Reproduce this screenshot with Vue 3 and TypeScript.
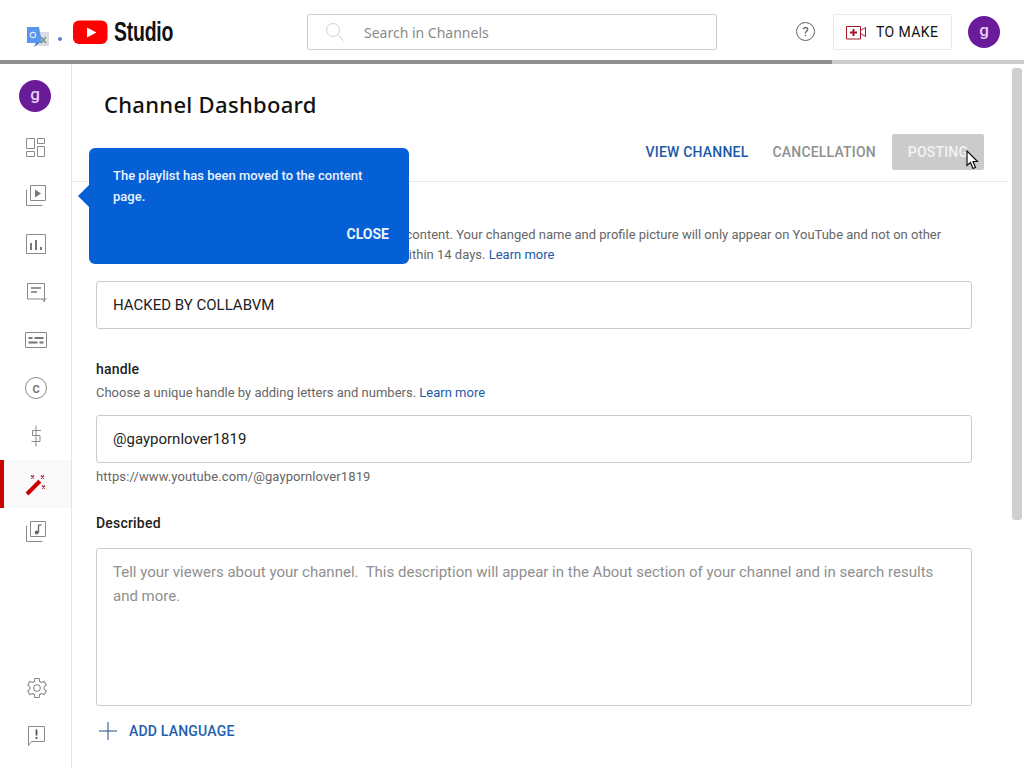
<script setup lang="ts">
const upper: { id: string; d: string; fill?: boolean }[] = [
  { id: 'dash', d: 'M3.5 3.5h8v10h-8zM14.5 3.5h7v5h-7zM3.5 16.500h8v5h-8zM14.5 11.500h7v10h-7z' },
  { id: 'content', d: 'M7.500 2.500h15v15h-15zM3.500 6.500v16h16' },
  { id: 'analytics', d: 'M3.500 3.500h19v19h-19z' },
  { id: 'comments', d: 'M4.500 4.500h17v15.500h2M4.500 4.500v15.500h17v3l-2.500-3' },
  { id: 'subs', d: 'M2.500 5.500h21v15h-21z' },
  { id: 'copyright', d: 'M13 2.500a10.500 10.500 0 1 0 0 21a10.500 10.500 0 0 0 0-21z' },
  { id: 'earn', d: 'M13 2.500v21M18 7.500h-8.500v5h7.500v6h-8.500' },
]
</script>

<template>
  <div class="app">
    <header class="top">
      <div class="brand">
        <svg class="translate" width="22" height="22" viewBox="0 0 22 22" aria-hidden="true">
          <rect x="10" y="5" width="12" height="14" fill="#dadce0" />
          <path d="M0 0h12l3 16H0z" fill="#5a95ee" />
          <path d="M9 16l-2 4 5-4z" fill="#3b5fb0" />
          <circle cx="6" cy="8" r="2.700" fill="none" stroke="#dbe8fb" stroke-width="1.200" />
          <path d="M14 10l5 6M19 10l-5 6" stroke="#6d8f80" stroke-width="1.200" />
        </svg>
        <span class="dot"></span>
        <svg class="yt" width="35" height="24" viewBox="0 0 35 24" aria-hidden="true">
          <rect x="0" y="0.500" width="34.500" height="23.500" rx="6" fill="#f00" />
          <path d="M14 7.500l9.500 5-9.500 5z" fill="#fff" />
        </svg>
        <span class="studio">Studio</span>
      </div>
      <div class="search">
        <svg width="20" height="20" viewBox="0 0 20 20" aria-hidden="true">
          <circle cx="8" cy="8" r="6.500" fill="none" stroke="#d0d0d0" stroke-width="1" />
          <path d="M12.700 12.700l6 6" stroke="#d0d0d0" stroke-width="1" />
        </svg>
        <span>Search in Channels</span>
      </div>
      <div class="actions">
        <span class="help">?</span>
        <button class="make">
          <svg width="22" height="16" viewBox="0 0 22 16" aria-hidden="true">
            <path d="M.500 2.500h14v12.500H.500zM14.500 6.500l5-3v9l-5-3" fill="none" stroke="#a3162c" stroke-width="1" />
            <path d="M7.500 5v7M4 8.500h7" stroke="#a3162c" stroke-width="2" />
          </svg>
          TO MAKE
        </button>
        <span class="avatar">g</span>
      </div>
    </header>
    <div class="progress"><div class="progress-fill"></div></div>

    <div class="body">
      <nav class="side">
        <div class="side-avatar"><span class="avatar">g</span></div>
        <div v-for="item in upper" :key="item.id" class="nav-row">
          <svg width="26" height="26" viewBox="0 0 26 26" aria-hidden="true">
            <path :d="item.d" fill="none" stroke="#8a8a8a" stroke-width="1" />
            <path v-if="item.id === 'content'" d="M12 6.500l6 4-6 4z" fill="#777" />
            <path v-if="item.id === 'analytics'" d="M8 12v7M13 9v10M18 16v3" stroke="#777" stroke-width="2" />
            <path v-if="item.id === 'comments'" d="M8 9h10M8 13h6" stroke="#777" stroke-width="1.500" />
            <path v-if="item.id === 'subs'" d="M5.500 11h4M11.500 11h9M5.500 15.500h9M16.500 15.500h4" stroke="#777" stroke-width="2" />
            <text v-if="item.id === 'copyright'" x="13" y="17.500" class="c-glyph">C</text>
          </svg>
        </div>
        <div class="nav-row active">
          <svg width="26" height="26" viewBox="0 0 26 26" aria-hidden="true">
            <path d="M4 23L17 10" stroke="#cc0000" stroke-width="4" />
            <path d="M16 8l3 3" stroke="#fff" stroke-width="1.500" />
            <path d="M8 4.500l3 3M11 4.500l-3 3M18 4.500l3 3M21 4.500l-3 3M19 14.500l3 3M22 14.500l-3 3" stroke="#b0203a" stroke-width="1.300" />
          </svg>
        </div>
        <div class="nav-row">
          <svg width="26" height="26" viewBox="0 0 26 26" aria-hidden="true">
            <path d="M7.500 2.500h15v15h-15zM3.500 6.500v16h16" fill="none" stroke="#8a8a8a" stroke-width="1" />
            <path d="M15.500 6v7.500" stroke="#666" stroke-width="1.300" />
            <path d="M15.500 6h3" stroke="#666" stroke-width="1.300" />
            <circle cx="13.700" cy="13.500" r="1.900" fill="#666" />
          </svg>
        </div>
        <div class="side-spacer"></div>
        <div class="nav-row">
          <svg width="26" height="26" viewBox="0 0 24 24" aria-hidden="true">
            <path d="M19.400 13a7.500 7.500 0 0 0 0-2l2.100-1.600-2-3.500-2.500 1a7.500 7.500 0 0 0-1.700-1l-.4-2.700h-4l-.4 2.700a7.500 7.500 0 0 0-1.700 1l-2.500-1-2 3.500L6.400 11a7.500 7.500 0 0 0 0 2l-2.100 1.600 2 3.500 2.500-1a7.500 7.500 0 0 0 1.700 1l.4 2.700h4l.4-2.700a7.500 7.500 0 0 0 1.700-1l2.500 1 2-3.500z" fill="none" stroke="#8a8a8a" stroke-width="1" />
            <circle cx="12.900" cy="12" r="3" fill="none" stroke="#8a8a8a" stroke-width="1" />
          </svg>
        </div>
        <div class="nav-row">
          <svg width="26" height="26" viewBox="0 0 26 26" aria-hidden="true">
            <path d="M5.500 3.500h16v15h-13l-3 4z" fill="none" stroke="#8a8a8a" stroke-width="1" />
            <path d="M13.500 6.500v6M13.500 14v2" stroke="#555" stroke-width="1.800" />
          </svg>
        </div>
      </nav>

      <main class="main">
        <h1 class="title">Channel Dashboard</h1>
        <div class="tabs">
          <a class="view">VIEW CHANNEL</a>
          <a class="cancel">CANCELLATION</a>
          <button class="post">POSTING</button>
        </div>
        <section class="form">
          <h2 class="label first">Name</h2>
          <p class="hint">Choose a channel name that represents you and your content. Your changed name and profile picture will only appear on YouTube and not on other Google properties. You can change your name twice within 14 days. <a>Learn more</a></p>
          <div class="field">HACKED BY COLLABVM</div>
          <h2 class="label handle">handle</h2>
          <p class="hint single">Choose a unique handle by adding letters and numbers. <a>Learn more</a></p>
          <div class="field">@gaypornlover1819</div>
          <p class="url">https://www.youtube.com/@gaypornlover1819</p>
          <h2 class="label described">Described</h2>
          <div class="area">Tell your viewers about your channel.&nbsp; This description will appear in the About section of your channel and in search results and more.</div>
          <div class="add">
            <svg width="20" height="20" viewBox="0 0 20 20" aria-hidden="true">
              <path d="M10 1v18M1 10h18" stroke="#1c4f7c" stroke-width="1" />
            </svg>
            <span>ADD LANGUAGE</span>
          </div>
        </section>
      </main>
    </div>

    <div class="tip">
      <p>The playlist has been moved to the content page.</p>
      <div class="tip-close">CLOSE</div>
    </div>
    <div class="scroll"></div>
    <svg class="cursor" width="14" height="20" viewBox="0 0 14 20" aria-hidden="true">
      <path d="M1 1v14.500l3.500-3 2.500 6 2.500-1-2.500-6h4.500z" fill="#fff" stroke="#111" stroke-width="1.200" />
    </svg>
  </div>
</template>

<style>
html, body { margin: 0; background: #fff; }
</style>

<style scoped>
.app {
  position: relative;
  width: 1024px;
  height: 768px;
  overflow: hidden;
  background: #fff;
  font-family: Roboto, "Liberation Sans", sans-serif;
  color: #0d0d0d;
}
.top {
  display: flex;
  align-items: center;
  height: 60px;
  box-sizing: border-box;
  padding: 0 24px 0 27px;
}
.brand { display: flex; align-items: center; width: 280px; }
.translate { margin-top: 15px; }
.dot { width: 4px; height: 4px; margin: 17px 11px 0 9px; border-radius: 50%; background: #5b7fd8; }
.yt { margin-top: 4px; }
.studio {
  display: inline-block;
  margin: 4px 0 0 6px;
  font: 700 27px/32px "Liberation Sans", sans-serif;
  letter-spacing: -0.3px;
  transform: scaleX(0.72);
  transform-origin: left center;
  color: #111;
}
.search {
  display: flex;
  align-items: center;
  gap: 19px;
  width: 410px;
  height: 36px;
  box-sizing: border-box;
  padding-left: 17px;
  border: 1px solid #ccc;
  border-radius: 3px;
  font: 400 14px "Noto Sans", sans-serif;
  color: #8a8a8a;
  margin-top: 4px;
}
.actions { display: flex; align-items: center; margin-left: auto; margin-top: 3px; }
.help {
  width: 19px;
  height: 19px;
  box-sizing: border-box;
  border: 1px solid #606060;
  border-radius: 50%;
  font-size: 13px;
  line-height: 17px;
  text-align: center;
  color: #555;
}
.make {
  display: flex;
  align-items: center;
  gap: 8px;
  height: 36px;
  width: 119px;
  margin: 0 16px 0 18px;
  padding: 0 0 0 12px;
  box-sizing: border-box;
  background: #fff;
  border: 1px solid #e8e8e8;
  border-radius: 2px;
  font: 400 14px Roboto, sans-serif;
  letter-spacing: 0.4px;
  color: #111;
}
.avatar {
  display: block;
  width: 32px;
  height: 32px;
  border-radius: 50%;
  background: #6a1b9a;
  color: #e9cdf2;
  font: 500 17px/29px Roboto, sans-serif;
  text-align: center;
}
.progress { height: 4px; background: #ccc; }
.progress-fill { width: 832px; height: 4px; background: #909090; }
.body { display: flex; height: 704px; }
.side {
  display: flex;
  flex-direction: column;
  flex: none;
  width: 72px;
  box-sizing: border-box;
  border-right: 1px solid #e4e4e4;
  padding-bottom: 8px;
}
.side-avatar { display: flex; justify-content: center; padding: 16px 1px 12px 0; }
.nav-row {
  display: flex;
  align-items: center;
  justify-content: center;
  height: 48px;
  box-sizing: border-box;
  flex: none;
}
.nav-row.active { background: #f9f9f9; border-left: 4px solid #cc0000; padding-right: 4px; }
.c-glyph { font: 700 11px Roboto, sans-serif; fill: #777; text-anchor: middle; }
.side-spacer { flex: 1; }
.main { flex: 1; min-width: 0; }
.title {
  margin: 26px 0 0 32px;
  font: 500 22px/28px "Noto Sans", sans-serif;
  letter-spacing: 0.3px;
  color: #111;
}
.tabs {
  display: flex;
  align-items: center;
  justify-content: flex-end;
  width: 936px;
  height: 38px;
  margin-top: 15px;
  padding: 0 24px 10px 0;
  box-sizing: content-box;
  width: 912px;
  border-bottom: 1px solid #e8e8e8;
  font: 500 14px Roboto, sans-serif;
  letter-spacing: 0.2px;
}
.view { color: #1c5aa8; margin-right: 24px; }
.cancel { color: #8f8f8f; margin-right: 16px; }
.post {
  width: 92px;
  height: 36px;
  padding: 0;
  background: #cbcbcb;
  border: 0;
  border-radius: 2px;
  color: #f3f3f3;
  font: inherit;
  letter-spacing: inherit;
}
.form { width: 876px; margin-left: 24px; }
.label { margin: 0; font: 500 14px/20px Roboto, sans-serif; color: #222; letter-spacing: 0.2px; }
.first { padding-top: 17px; }
.hint {
  margin: 6px 0 0;
  font: 400 13px/20px Roboto, sans-serif;
  color: #666;
  width: 876px;
}
.hint a { color: #1c5aa8; }
.hint.single { margin-top: 4px; }
.field {
  height: 48px;
  margin-top: 16px;
  padding: 0 16px;
  box-sizing: border-box;
  border: 1px solid #ccc;
  border-radius: 3px;
  font: 400 15px/46px Roboto, sans-serif;
  color: #222;
}
.hint.single + .field { margin-top: 12px; }
.handle { margin-top: 30px; }
.url { margin: 5px 0 0; font: 400 13px/18px Roboto, sans-serif; color: #666; letter-spacing: 0.1px; }
.described { margin-top: 27px; }
.area {
  height: 158px;
  margin-top: 15px;
  padding: 11px 16px;
  box-sizing: border-box;
  border: 1px solid #ccc;
  border-radius: 3px;
  font: 400 15px/24px Roboto, sans-serif;
  color: #8f8f8f;
}
.add {
  display: flex;
  align-items: center;
  gap: 11px;
  margin-top: 15px;
  padding-left: 2px;
  font: 500 14px/20px Roboto, sans-serif;
  letter-spacing: 0.2px;
  color: #2160ad;
}
.tip {
  position: absolute;
  left: 89px;
  top: 148px;
  width: 320px;
  height: 116px;
  box-sizing: border-box;
  padding: 17px 20px 0 24px;
  background: #0560d6;
  border-radius: 6px;
  color: #e9f3ff;
  font: 500 13px/21px Roboto, sans-serif;
}
.tip::before {
  content: "";
  position: absolute;
  left: -11px;
  top: 37px;
  width: 0;
  height: 0;
  border-top: 11px solid transparent;
  border-bottom: 11px solid transparent;
  border-right: 11px solid #0560d6;
}
.tip p { margin: 0; }
.tip-close { margin-top: 17px; text-align: right; font-size: 14px; font-weight: 700; }
.scroll {
  position: absolute;
  left: 1012px;
  top: 68px;
  width: 10px;
  height: 452px;
  background: #cfcfcf;
  border-radius: 3px;
}
.cursor { position: absolute; left: 966px; top: 150px; }
</style>
